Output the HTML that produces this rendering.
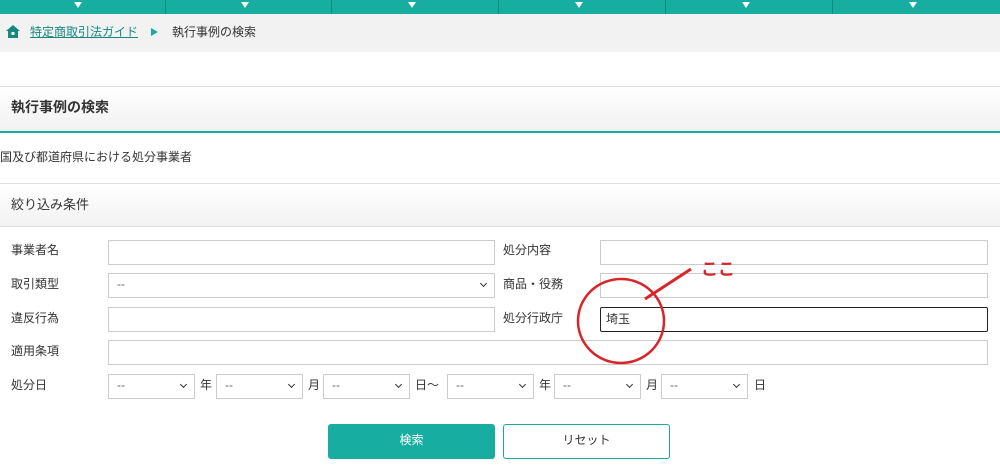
<!DOCTYPE html><html><head><meta charset="utf-8"><style>
body{margin:0;width:1000px;height:473px;overflow:hidden;background:#fff;font-family:"Liberation Sans","Noto Sans CJK JP",sans-serif;font-size:12px;color:#333;position:relative}
.a{position:absolute}
.top{left:0;top:0;width:1000px;height:14px;background:#17ada0}
.div{top:0;width:1px;height:14px;background:#0e8c80}
.tri{top:2px;width:0;height:0;border-left:4px solid transparent;border-right:4px solid transparent;border-top:6px solid #fff}
.inp{border:1px solid #ccc;height:25px;box-sizing:border-box;background:#fff}
.sel{border:1px solid #ccc;height:25px;box-sizing:border-box;background:#fff;color:#666;padding-left:8px;line-height:20px}
.sel:after{content:"";position:absolute;right:8px;top:7px;width:4px;height:4px;border-right:1.5px solid #333;border-bottom:1.5px solid #333;transform:rotate(45deg)}
.lbl{font-size:12px}
</style></head><body>
<div class="a top"></div>
<div class="a div" style="left:165px"></div><div class="a div" style="left:331px"></div><div class="a div" style="left:498px"></div><div class="a div" style="left:665px"></div><div class="a div" style="left:832px"></div>
<div class="a tri" style="left:74px"></div><div class="a tri" style="left:241px"></div><div class="a tri" style="left:408px"></div><div class="a tri" style="left:575px"></div><div class="a tri" style="left:742px"></div><div class="a tri" style="left:909px"></div>
<div class="a" style="left:0;top:14px;width:1000px;height:38px;background:#f2f2f2"></div>
<svg class="a" style="left:6px;top:25px" width="14" height="13" viewBox="0 0 14 13"><path d="M7 0L0 6h2v7h10V6h2z" fill="#17887d"/><rect x="5.5" y="7" width="3" height="3" fill="#fff"/></svg>
<div class="a" style="left:30px;top:23px;color:#17887d;text-decoration:underline">特定商取引法ガイド</div>
<div class="a" style="left:151px;top:28px;border-top:4px solid transparent;border-bottom:4px solid transparent;border-left:7px solid #17ada0"></div>
<div class="a" style="left:172px;top:23px;color:#333">執行事例の検索</div>
<div class="a" style="left:0;top:86px;width:1000px;height:44px;border-top:1px solid #ddd;border-bottom:2px solid #17ada0;background:linear-gradient(#fff,#f1f1f1)"></div>
<div class="a" style="left:11px;top:97px;font-size:14px;font-weight:bold;color:#333">執行事例の検索</div>
<div class="a" style="left:0;top:148px">国及び都道府県における処分事業者</div>
<div class="a" style="left:0;top:183px;width:1000px;height:42px;border-top:1px solid #ddd;border-bottom:1px solid #ddd;background:linear-gradient(#fff,#f2f2f2)"></div>
<div class="a" style="left:11px;top:194px;font-size:13px">絞り込み条件</div>
<div class="a lbl" style="left:11px;top:241px">事業者名</div><div class="a inp" style="left:108px;top:240px;width:387px"></div>
<div class="a lbl" style="left:503px;top:241px">処分内容</div><div class="a inp" style="left:600px;top:240px;width:388px"></div>
<div class="a lbl" style="left:11px;top:275px">取引類型</div><div class="a sel" style="left:108px;top:273px;width:387px">--</div>
<div class="a lbl" style="left:503px;top:275px">商品・役務</div><div class="a inp" style="left:600px;top:273px;width:388px"></div>
<div class="a lbl" style="left:11px;top:309px">違反行為</div><div class="a inp" style="left:108px;top:307px;width:387px"></div>
<div class="a lbl" style="left:503px;top:309px">処分行政庁</div><div class="a" style="left:600px;top:307px;width:388px;height:25px;box-sizing:border-box;border:1px solid #222;border-radius:2px;padding:2px 5px">埼玉</div>
<div class="a lbl" style="left:11px;top:342px">適用条項</div><div class="a inp" style="left:108px;top:340px;width:880px"></div>
<div class="a lbl" style="left:11px;top:376px">処分日</div>
<div class="a sel" style="left:108px;top:374px;width:87px">--</div><div class="a" style="left:200px;top:376px">年</div>
<div class="a sel" style="left:216px;top:374px;width:87px">--</div><div class="a" style="left:308px;top:376px">月</div>
<div class="a sel" style="left:323px;top:374px;width:87px">--</div><div class="a" style="left:415px;top:376px">日～</div>
<div class="a sel" style="left:447px;top:374px;width:87px">--</div><div class="a" style="left:539px;top:376px">年</div>
<div class="a sel" style="left:554px;top:374px;width:87px">--</div><div class="a" style="left:646px;top:376px">月</div>
<div class="a sel" style="left:661px;top:374px;width:87px">--</div><div class="a" style="left:754px;top:376px">日</div>
<div class="a" style="left:328px;top:424px;width:167px;height:35px;background:#17ada0;border-radius:3px;color:#fff;text-align:center;line-height:33px">検索</div>
<div class="a" style="left:503px;top:424px;width:167px;height:35px;box-sizing:border-box;border:1px solid #17ada0;border-radius:3px;text-align:center;line-height:31px">リセット</div>
<svg class="a" style="left:0;top:0" width="1000" height="473"><ellipse cx="621" cy="321" rx="43" ry="42" fill="none" stroke="#d9252a" stroke-width="2.5"/><line x1="691" y1="269" x2="645" y2="299" stroke="#d9252a" stroke-width="3"/><text x="701" y="275" fill="#d9252a" font-size="17" font-weight="bold" font-family="Noto Sans CJK JP, sans-serif">ここ</text></svg>
</body></html>
